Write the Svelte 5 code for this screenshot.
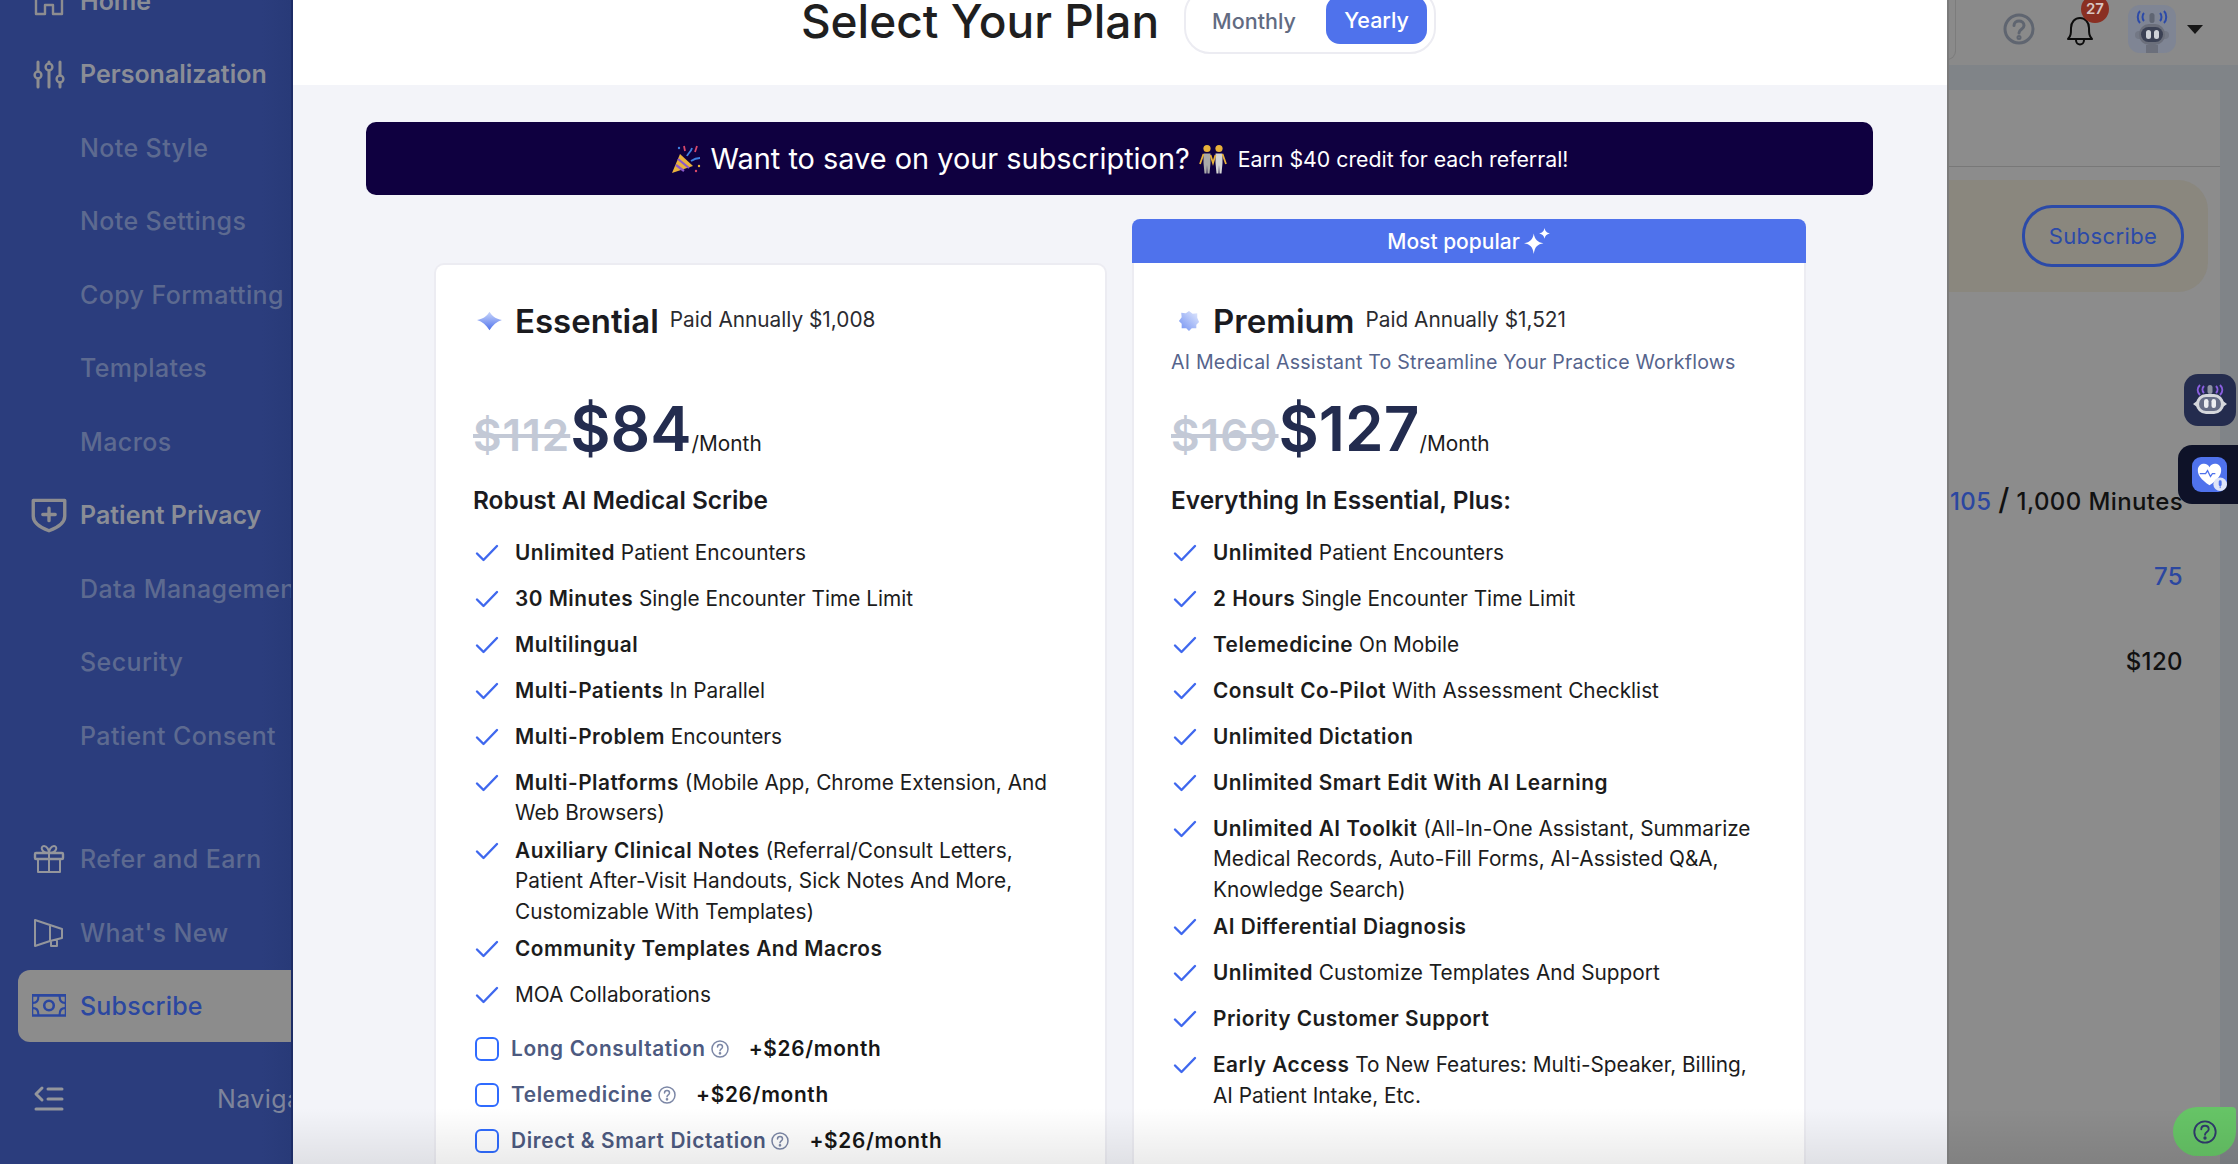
<script>
  const navTop = [
    { label: 'Home', icon: 'home', strong: true },
    { label: 'Personalization', icon: 'sliders', strong: true },
    { label: 'Note Style' },
    { label: 'Note Settings' },
    { label: 'Copy Formatting' },
    { label: 'Templates' },
    { label: 'Macros' },
    { label: 'Patient Privacy', icon: 'shield', strong: true },
    { label: 'Data Management' },
    { label: 'Security' },
    { label: 'Patient Consent' }
  ];

  const essential = [
    ['Unlimited', ' Patient Encounters'],
    ['30 Minutes', ' Single Encounter Time Limit'],
    ['Multilingual', ''],
    ['Multi-Patients', ' In Parallel'],
    ['Multi-Problem', ' Encounters'],
    ['Multi-Platforms', ' (Mobile App, Chrome Extension, And Web Browsers)'],
    ['Auxiliary Clinical Notes', ' (Referral/Consult Letters, Patient After-Visit Handouts, Sick Notes And More, Customizable With Templates)'],
    ['Community Templates And Macros', ''],
    ['', 'MOA Collaborations']
  ];

  const premium = [
    ['Unlimited', ' Patient Encounters'],
    ['2 Hours', ' Single Encounter Time Limit'],
    ['Telemedicine', ' On Mobile'],
    ['Consult Co-Pilot', ' With Assessment Checklist'],
    ['Unlimited Dictation', ''],
    ['Unlimited Smart Edit With AI Learning', ''],
    ['Unlimited AI Toolkit', ' (All-In-One Assistant, Summarize Medical Records, Auto-Fill Forms, AI-Assisted Q&A, Knowledge Search)'],
    ['AI Differential Diagnosis', ''],
    ['Unlimited', ' Customize Templates And Support'],
    ['Priority Customer Support', ''],
    ['Early Access', ' To New Features: Multi-Speaker, Billing, AI Patient Intake, Etc.']
  ];

  const addons = ['Long Consultation', 'Telemedicine', 'Direct & Smart Dictation'];
</script>

{#snippet navIcon(name)}
  <svg class="nav-icon {name}" viewBox="0 0 32 32" fill="none" stroke="currentColor" stroke-width="2.4" stroke-linecap="round" stroke-linejoin="round">
    {#if name === 'home'}
      <path d="M3 13 16 3l13 10v16H20v-9h-8v9H3z" />
    {:else if name === 'sliders'}
      <path d="M5 4v9M5 21v8M16 4v1M16 13v16M27 4v13M27 25v4" stroke-width="3" />
      <circle cx="5" cy="17" r="3.400" /><circle cx="16" cy="9" r="3.400" /><circle cx="27" cy="21" r="3.400" />
    {:else if name === 'shield'}
      <path d="M2 3h28v14c0 6-6 10-14 13C8 27 2 23 2 17z" stroke-width="3" />
      <path d="M16 10v11M10.500 15.500h11" stroke-width="3" />
    {:else if name === 'gift'}
      <rect x="2" y="10" width="28" height="6" rx="1" /><path d="M5 16v13h22V16M16 10v19M16 10c-8 0-9-7-5-7 3 0 5 4 5 7zm0 0c8 0 9-7 5-7-3 0-5 4-5 7z" stroke-width="2" />
    {:else if name === 'megaphone'}
      <path d="M2 3l15 5v16L2 29zM17 8l12 4v9l-12 3M18 25v4h6v-5" stroke-width="2" />
    {:else if name === 'money'}
      <rect x="0" y="6" width="32" height="19" stroke-width="2.400" />
      <circle cx="16" cy="15.500" r="4.500" /><path d="M1 13c3 0 5-2 5-6M1 18c3 0 5 2 5 6M31 13c-3 0-5-2-5-6M31 18c-3 0-5 2-5 6" stroke-width="2" />
    {:else if name === 'collapse'}
      <path d="M9 5 3 11l6 6M15 6h14M15 16h14M3 26h26" stroke-width="3" />
    {/if}
  </svg>
{/snippet}

{#snippet check()}
  <svg class="check" viewBox="0 0 24 20" fill="none" stroke="#3f68ee" stroke-width="2.400" stroke-linecap="round" stroke-linejoin="round"><path d="M2 10.500 8.500 17 22 3" /></svg>
{/snippet}

{#snippet helpDot()}
  <svg class="help-dot" viewBox="0 0 20 20" fill="none" stroke="#7c87a6" stroke-width="1.500"><circle cx="10" cy="10" r="8" /><path d="M7.500 8c0-3.200 5-3.200 5 0 0 2-2.500 1.800-2.500 3.800" stroke-linecap="round" /><circle cx="10" cy="14.300" r=".6" /></svg>
{/snippet}

{#snippet features(items)}
  <ul class="features">
    {#each items as [bold, rest]}
      <li>
        {@render check()}
        <span><b>{bold}</b>{rest}</span>
      </li>
    {/each}
  </ul>
{/snippet}

<div class="screen">
  <aside class="sidebar">
    <nav class="nav nav-top">
      {#each navTop as item}
        <div class="nav-row" class:strong={item.strong}>
          <span class="icon-slot">{#if item.icon}{@render navIcon(item.icon)}{/if}</span>
          <span class="nav-label">{item.label}</span>
        </div>
      {/each}
    </nav>
    <nav class="nav nav-bottom">
      <div class="nav-row"><span class="icon-slot light">{@render navIcon('gift')}</span><span class="nav-label">Refer and Earn</span></div>
      <div class="nav-row"><span class="icon-slot light">{@render navIcon('megaphone')}</span><span class="nav-label">What's New</span></div>
      <div class="nav-row active"><span class="icon-slot">{@render navIcon('money')}</span><span class="nav-label">Subscribe</span></div>
    </nav>
    <div class="collapse-row">
      <span class="icon-slot light">{@render navIcon('collapse')}</span>
      <span class="collapse-label">Navigation</span>
    </div>
  </aside>

  <main class="modal">
    <header class="modal-head">
      <h1>Select Your Plan</h1>
      <div class="toggle">
        <span class="toggle-opt">Monthly</span>
        <span class="toggle-opt on">Yearly</span>
      </div>
    </header>

    <div class="modal-body">
      <div class="promo">
        <svg class="emoji" viewBox="0 0 32 30">
          <path d="M1 29 9 10l13 12z" fill="#e9b23c" />
          <path d="M5 21l8 6M7 15l11 9" stroke="#8b58c9" stroke-width="2.200" />
          <path d="M16 12c1-3 4-4 5-8M20 17c3-2 6-3 9-3" stroke="#3e7fe0" stroke-width="1.800" fill="none" />
          <path d="M13 2l1 5M26 2l-2 6" stroke="#d8486a" stroke-width="1.800" />
          <circle cx="28" cy="22" r="1.200" fill="#e9b23c" /><circle cx="25" cy="27" r="1.200" fill="#d8486a" /><circle cx="8" cy="4" r="1.200" fill="#3e7fe0" />
        </svg>
        <span class="promo-main">Want to save on your subscription?</span>
        <svg class="emoji people" viewBox="0 0 28 30">
          <circle cx="8" cy="4.500" r="3.600" fill="#e8b13a" /><circle cx="20" cy="4.500" r="3.600" fill="#e8b13a" />
          <path d="M4.500 9.500h7V19l-1 10.500h-2L8 21l-.5 8.500h-2L4.500 19z" fill="#a9a9a9" /><path d="M16.500 9.500h7V19l-1 10.500h-2L20 21l-.5 8.500h-2L16.500 19z" fill="#d5d5d5" />
          <path d="M4.500 10 1 20M23.500 10 27 20M11.500 11l2.500 8 2.500-8" stroke="#e8b13a" stroke-width="1.800" fill="none" />
        </svg>
        <span class="promo-sub">Earn $40 credit for each referral!</span>
      </div>

      <div class="plans">
        <section class="plan plan-plain">
          <div class="card">
            <div class="plan-head">
              <svg class="gem" viewBox="0 0 26 20"><defs><linearGradient id="g1" x1="0" y1="0" x2="0" y2="1"><stop offset="0" stop-color="#c9d6fb" /><stop offset="1" stop-color="#4f72ec" /></linearGradient></defs><path d="M13 1c2 3.500 6 7 12 8-5 1.500-9 5-12 10C10 14 6 10.500 1 9c6-1 10-4.500 12-8z" fill="url(#g1)" /></svg>
              <h2>Essential</h2>
              <span class="paid">Paid Annually $1,008</span>
            </div>
            <div class="tagline"></div>
            <div class="price"><s>$112</s><strong>$84</strong><span>/Month</span></div>
            <h3>Robust AI Medical Scribe</h3>
            {@render features(essential)}
            <ul class="addons">
              {#each addons as name}
                <li>
                  <span class="box"></span>
                  <span class="addon-name">{name}</span>
                  {@render helpDot()}
                  <span class="addon-price">+$26/month</span>
                </li>
              {/each}
            </ul>
          </div>
        </section>

        <section class="plan">
          <div class="popular">Most popular
            <svg class="sparkle" viewBox="0 0 26 26" fill="#fff"><path d="M10 6c1 6 3.500 8 9 9-5.500 1-8 3-9 10-1-7-3.500-9-9-10 5.500-1 8-3 9-9zM20 1c.6 3 1.800 4.200 5 5-3.200.8-4.400 2-5 5-.6-3-1.800-4.200-5-5 3.200-.8 4.400-2 5-5z" /></svg>
          </div>
          <div class="card card-flat">
            <div class="plan-head">
              <svg class="gem gem-b" viewBox="0 0 24 24"><defs><linearGradient id="g2" x1="1" y1="0" x2="0" y2="1"><stop offset="0" stop-color="#e6ecfd" /><stop offset="1" stop-color="#6f8ff2" /></linearGradient></defs><path d="M12 1l4 3 5-.5 0 5L23 13l-3 3 0 4-5 0-3 3-3-3-5 0 0-5-3-3 3-4-.5-5 5 .5z" fill="url(#g2)" /></svg>
              <h2>Premium</h2>
              <span class="paid">Paid Annually $1,521</span>
            </div>
            <div class="tagline">AI Medical Assistant To Streamline Your Practice Workflows</div>
            <div class="price"><s>$169</s><strong>$127</strong><span>/Month</span></div>
            <h3>Everything In Essential, Plus:</h3>
            {@render features(premium)}
          </div>
        </section>
      </div>
    </div>
    <div class="bottom-fade"></div>
  </main>

  <div class="behind">
    <div class="topbar">
      <span class="search-edge"></span>
      <svg class="top-help" viewBox="0 0 32 32" fill="none" stroke="#5f6570" stroke-width="3"><circle cx="16" cy="16" r="14" /><path d="M11 12.500c0-6 10-6 10 0 0 4-5 3.500-5 7.500" stroke-linecap="round" /><circle cx="16" cy="24.500" r="1" /></svg>
      <div class="bell">
        <svg viewBox="0 0 30 34" fill="none" stroke="#0c0c0c" stroke-width="2" stroke-linejoin="round"><path d="M3 27c3-3 3-6 3-11 0-6 4-10 9-10s9 4 9 10c0 5 0 8 3 11z" /><path d="M11 28c0 6 8 6 8 0" /></svg>
        <span class="badge">27</span>
      </div>
      <div class="avatar">
        <svg viewBox="0 0 48 48">
          <path d="M16 8c-2 2-2 6 0 8M12 6c-3 3-3 9 0 12M32 8c2 2 2 6 0 8M36 6c3 3 3 9 0 12" stroke="#2c4aa8" stroke-width="2" fill="none" />
          <rect x="21.500" y="8" width="5" height="10" rx="2.500" fill="#5f6572" />
          <rect x="7" y="26" width="34" height="8" rx="4" fill="#737885" />
          <rect x="11" y="19" width="26" height="21" rx="10" fill="#6b6f7b" />
          <rect x="13" y="22" width="22" height="15" rx="7.500" fill="#3b4154" />
          <rect x="18" y="25" width="5" height="9" rx="2.500" fill="#cfd2d8" /><rect x="26" y="25" width="5" height="9" rx="2.500" fill="#cfd2d8" />
          <rect x="18" y="40" width="12" height="8" fill="#6b6f7b" />
        </svg>
      </div>
      <span class="caret"></span>
    </div>

    <div class="page">
      <div class="page-inner">
        <div class="blank-panel"></div>
        <div class="notice"><span class="subscribe-btn">Subscribe</span></div>
        <div class="stats">
          <div class="stat minutes"><span class="accent">105</span> <span class="slash">/</span> 1,000 Minutes</div>
          <div class="stat count accent">75</div>
          <div class="stat credit">$120</div>
        </div>
      </div>
    </div>

    <div class="float-bot">
      <svg viewBox="0 0 52 52">
        <path d="M20 12c-2 2-2 5 0 7M16 11c-3 3-3 7 0 10M32 12c2 2 2 5 0 7M36 11c3 3 3 7 0 10" stroke="#8a5fe0" stroke-width="2" fill="none" />
        <rect x="23.500" y="11" width="5" height="9" rx="2.500" fill="#8e93a3" />
        <path d="M9 30l4-3v6zM43 30l-4-3v6z" fill="#d5d7dc" />
        <rect x="12" y="20" width="28" height="20" rx="10" fill="#d5d7dc" />
        <rect x="15" y="23" width="22" height="14" rx="7" fill="#666d86" />
        <rect x="20" y="25" width="4.500" height="9" rx="2.200" fill="#eceef2" /><rect x="27.500" y="25" width="4.500" height="9" rx="2.200" fill="#eceef2" />
      </svg>
    </div>
    <div class="float-heart">
      <span class="heart-tile">
        <svg viewBox="0 0 36 36">
          <path d="M18 29C9 23 6 18 6 13.500 6 9 9.500 7 12.500 7c2.500 0 4.500 1.500 5.500 3.500C19 8.500 21 7 23.500 7 26.500 7 30 9 30 13.500 30 18 27 23 18 29z" fill="#fff" />
          <path d="M8 17h6l2-3 3 6 2-3h3" stroke="#4f72ec" stroke-width="1.300" fill="none" />
          <circle cx="29" cy="28" r="7" fill="#dfe5f7" /><rect x="27.500" y="24" width="3" height="6" rx="1.500" fill="#4f72ec" /><path d="M29 30v2" stroke="#4f72ec" stroke-width="1" />
        </svg>
      </span>
    </div>
    <div class="float-help">
      <svg viewBox="0 0 28 28" fill="none" stroke="#2f3a6b" stroke-width="2"><circle cx="14" cy="14" r="11.500" /><path d="M10 11c0-5 8-5 8 0 0 3-4 3-4 6" stroke-linecap="round" /><circle cx="14" cy="20.500" r=".8" /></svg>
    </div>
    <div class="bottom-fade"></div>
  </div>
</div>

<style>
  :global(body) {
    margin: 0;
    background: #8b8b8b;
  }

  .screen {
    display: grid;
    grid-template-columns: 293px 1654px 291px;
    width: 2238px;
    height: 1164px;
    overflow: hidden;
    font-family: Inter, "Liberation Sans", sans-serif;
  }

  /* sidebar */
  .sidebar {
    position: relative;
    display: flex;
    flex-direction: column;
    overflow: hidden;
    background: linear-gradient(90deg, #2b3d7d 90%, #283a78);
    border-right: 2px solid #1d2c66;
    box-sizing: border-box;
    font-family: Inter, "Noto Sans", sans-serif;
    font-size: 25px;
    font-weight: 500;
    letter-spacing: .4px;
    white-space: nowrap;
    color: #5d6a90;
  }

  .nav-top {
    margin-top: -36px;
  }

  .nav-bottom {
    margin-top: 50px;
  }

  .nav-row {
    display: flex;
    align-items: center;
    height: 73.500px;
    padding-left: 32px;
    box-sizing: border-box;
  }

  .nav-row.strong {
    color: #8a8d96;
    letter-spacing: 0;
  }

  .nav-row.strong .nav-label {
    font-weight: 600;
  }

  .nav-row.active {
    height: 72px;
    margin-left: 18px;
    padding-left: 14px;
    background: #8c8c8c;
    border-radius: 12px 0 0 12px;
    color: #2b47a0;
    letter-spacing: .2px;
  }

  .icon-slot {
    display: flex;
    justify-content: center;
    flex: none;
    width: 34px;
    margin-right: 14px;
    color: #8d8d90;
  }

  .icon-slot.light {
    color: #94969c;
  }

  .active .icon-slot {
    color: #2b47a0;
  }

  .nav-icon {
    flex: none;
    width: 32px;
    height: 32px;
  }

  .nav-icon.money {
    width: 34px;
    height: 34px;
  }

  .nav-icon.shield {
    width: 36px;
    height: 36px;
  }

  .collapse-row {
    display: flex;
    align-items: center;
    height: 58px;
    margin-top: 28px;
    padding-left: 32px;
  }

  .collapse-label {
    margin-left: 137px;
    font-weight: 400;
    color: #7d849b;
  }

  /* modal */
  .modal {
    position: relative;
    display: flex;
    flex-direction: column;
    overflow: hidden;
    background: #f3f4f9;
  }

  .modal-head {
    display: flex;
    flex: none;
    justify-content: center;
    align-items: center;
    gap: 25px;
    height: 85px;
    padding: 0 3px 43px 0;
    box-sizing: border-box;
    background: #fff;
  }

  h1 {
    margin: 0;
    font-size: 46px;
    font-weight: 500;
    color: #1f1f1f;
  }

  .toggle {
    display: flex;
    align-items: center;
    justify-content: space-between;
    flex: none;
    width: 252px;
    height: 66px;
    padding: 0 7px 0 26px;
    box-sizing: border-box;
    border: 2px solid #ececf2;
    border-radius: 26px;
    background: #fff;
  }

  .toggle-opt {
    font-size: 21.500px;
    font-weight: 500;
    color: #626b82;
  }

  .toggle-opt.on {
    width: 101px;
    margin-top: -2px;
    padding: 11px 0;
    text-align: center;
    border-radius: 14px;
    background: #4f72ec;
    color: #fff;
  }

  .modal-body {
    display: flex;
    flex: 1;
    flex-direction: column;
    padding: 37px 74px 0 73px;
  }

  .promo {
    display: flex;
    flex: none;
    justify-content: center;
    align-items: center;
    height: 73px;
    border-radius: 10px;
    background: #0f0040;
    color: #fff;
  }

  .promo-main {
    font-size: 28.900px;
    margin: 0 9px 0 8px;
  }

  .promo-sub {
    font-size: 21.300px;
    margin-left: 11px;
  }

  .emoji {
    flex: none;
    width: 32px;
    height: 30px;
  }

  .people {
    width: 28px;
  }

  .plans {
    display: grid;
    flex: 1;
    grid-template-columns: 673px 674px;
    gap: 25px;
    margin: 24px 0 0 68px;
  }

  .plan {
    display: flex;
    flex-direction: column;
  }

  .plan-plain {
    padding-top: 44px;
  }

  .popular {
    display: flex;
    flex: none;
    justify-content: center;
    align-items: center;
    gap: 3px;
    height: 44px;
    border-radius: 8px 8px 0 0;
    background: #4f72ec;
    font-size: 21px;
    font-weight: 500;
    color: #fff;
  }

  .sparkle {
    width: 28px;
    height: 28px;
  }

  .card {
    flex: 1;
    padding: 35px 37px 30px;
    background: #fff;
    border: 2px solid #ececf2;
    border-bottom: 0;
    border-radius: 10px 10px 0 0;
    box-sizing: border-box;
    color: #1c1c1c;
    font-size: 20.800px;
    line-height: 30.500px;
  }

  .card-flat {
    padding-top: 37px;
    border-top: 0;
    border-radius: 0;
  }

  .plan-head {
    display: flex;
    align-items: center;
    height: 42px;
  }

  .gem {
    width: 27px;
    height: 22px;
    flex: none;
    margin: 0 12px 0 3px;
  }

  .gem-b {
    margin-left: 7px;
    margin-right: 13px;
    height: 24px;
    width: 22px;
  }

  h2 {
    margin: 0 11px 0 0;
    font-size: 33px;
    font-weight: 600;
    color: #1b1b1f;
  }

  .paid {
    margin-top: -2px;
    color: #2b2b30;
  }

  .tagline {
    height: 30px;
    margin-top: 5px;
    color: #56648c;
    font-size: 19.600px;
    letter-spacing: .2px;
  }

  .price {
    display: flex;
    align-items: baseline;
    height: 80px;
    margin-top: 12px;
    line-height: 80px;
  }

  .price s {
    font-size: 44px;
    font-weight: 600;
    letter-spacing: 1px;
    color: #c3c9d6;
  }

  .price strong {
    font-size: 62px;
    font-weight: 600;
    color: #232c4f;
  }

  h3 {
    margin: 15.500px 0 16px;
    font-size: 24.400px;
    line-height: 30px;
    font-weight: 600;
    color: #1b1b1f;
  }

  .features {
    list-style: none;
    margin: 0;
    padding: 0;
  }

  .features li {
    display: flex;
    min-height: 46px;
    padding-top: 7px;
    box-sizing: border-box;
  }

  .features b {
    font-weight: 600;
    letter-spacing: .5px;
  }

  .check {
    flex: none;
    width: 24px;
    height: 20px;
    margin: 5px 16px 0 2px;
  }

  .addons {
    list-style: none;
    margin: 7px 0 0;
    padding: 0;
  }

  .addons li {
    display: flex;
    align-items: center;
    height: 46px;
  }

  .box {
    flex: none;
    width: 24px;
    height: 24px;
    margin: 0 12px 0 2px;
    border: 2px solid #2f6bff;
    border-radius: 6px;
    box-sizing: border-box;
  }

  .addon-name {
    font-weight: 600;
    letter-spacing: .65px;
    color: #4d5a80;
  }

  .help-dot {
    flex: none;
    width: 20px;
    height: 20px;
    margin-left: 4px;
  }

  .addon-price {
    margin-left: 19px;
    font-weight: 600;
    letter-spacing: .7px;
    color: #161616;
  }

  .bottom-fade {
    position: absolute;
    left: 0;
    right: 0;
    bottom: 0;
    height: 56px;
    background: linear-gradient(rgba(0, 0, 0, 0), rgba(0, 0, 0, .08));
    pointer-events: none;
  }

  /* page behind the modal */
  .behind {
    position: relative;
    display: flex;
    flex-direction: column;
    overflow: hidden;
    background: #858688;
    border-left: 2px solid #7b7b7b;
    box-sizing: border-box;
    font-family: Inter, "Noto Sans", sans-serif;
  }

  .topbar {
    display: flex;
    flex: none;
    align-items: center;
    height: 65px;
    background: #8a8a8a;
  }

  .search-edge {
    width: 8px;
    height: 70px;
    margin: -18px 0 0 -2px;
    border: 1px solid #7c7c7c;
    border-left: 0;
    border-radius: 0 10px 10px 0;
  }

  .top-help {
    flex: none;
    width: 32px;
    height: 32px;
    margin: -8px 0 0 47px;
  }

  .bell {
    position: relative;
    flex: none;
    width: 30px;
    height: 34px;
    margin: -8px 0 0 30px;
  }

  .badge {
    position: absolute;
    left: 16px;
    top: -17px;
    width: 28px;
    height: 28px;
    border-radius: 50%;
    background: #8a2f22;
    color: #d9c6c2;
    font-size: 15px;
    font-weight: 600;
    line-height: 28px;
    text-align: center;
  }

  .avatar {
    flex: none;
    width: 48px;
    height: 48px;
    margin: -8px 0 0 33px;
    border-radius: 12px;
    background: #7f8594;
    overflow: hidden;
  }

  .caret {
    width: 0;
    height: 0;
    margin: -6px 0 0 11px;
    border-left: 8px solid transparent;
    border-right: 8px solid transparent;
    border-top: 9px solid #161616;
  }

  .page {
    flex: 1;
    background: #808488;
    padding-top: 25px;
  }

  .page-inner {
    display: flex;
    flex-direction: column;
    width: 271px;
    height: 100%;
    background: #8c8c8c;
  }

  .blank-panel {
    flex: none;
    height: 77px;
    border-bottom: 1px solid #787878;
    box-sizing: border-box;
  }

  .notice {
    display: flex;
    align-items: center;
    flex: none;
    width: 259px;
    height: 112px;
    margin-top: 13px;
    border-radius: 0 30px 30px 0;
    background: #8a877e;
    box-sizing: border-box;
    padding-left: 73px;
  }

  .subscribe-btn {
    display: flex;
    justify-content: center;
    align-items: center;
    width: 162px;
    height: 62px;
    border: 3px solid #2b4aa8;
    border-radius: 30px;
    box-sizing: border-box;
    color: #2b4aa8;
    font-size: 22px;
    letter-spacing: .4px;
  }

  .stats {
    width: 234px;
    font-size: 24px;
    font-weight: 500;
    letter-spacing: .4px;
    color: #111;
    text-align: right;
    white-space: nowrap;
  }

  .stat {
    line-height: 30px;
  }

  .minutes {
    margin-top: 192px;
  }

  .count {
    margin-top: 44.500px;
  }

  .credit {
    margin-top: 55px;
  }

  .accent {
    color: #2b47a0;
  }

  .slash {
    font-size: 30px;
  }

  .float-bot {
    position: absolute;
    left: 235px;
    top: 374px;
    width: 52px;
    height: 52px;
    border-radius: 14px;
    background: #242c4e;
  }

  .float-heart {
    position: absolute;
    left: 229px;
    top: 445px;
    display: flex;
    align-items: center;
    padding-left: 14px;
    width: 60px;
    height: 59px;
    box-sizing: border-box;
    border-radius: 14px 0 0 14px;
    background: #0e1228;
  }

  .heart-tile {
    display: block;
    width: 35px;
    height: 35px;
    border-radius: 9px;
    background: #4f72ec;
  }

  .float-help {
    position: absolute;
    left: 224px;
    top: 1107px;
    display: flex;
    align-items: center;
    justify-content: center;
    width: 63px;
    height: 49px;
    border-radius: 26px 4px 26px 26px;
    background: #66c466;
  }

  .float-help svg {
    width: 26px;
    height: 26px;
  }
</style>
